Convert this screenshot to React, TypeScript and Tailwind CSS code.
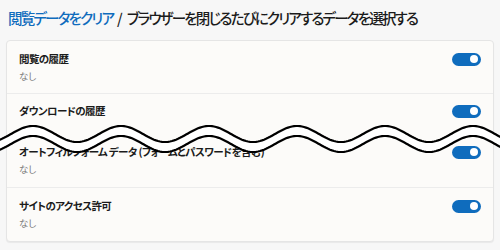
const FONT = "font-['Noto_Sans_CJK_JP','Noto_Sans',sans-serif] [font-feature-settings:'palt']";

function Toggle() {
  return (
    <span className="relative inline-flex h-[13px] w-[29px] shrink-0 items-center rounded-full bg-[#0f6cbd]">
      <span className="absolute right-[3px] h-[8px] w-[8px] rounded-full bg-white" />
    </span>
  );
}

function Title({ children }: { children: React.ReactNode }) {
  return (
    <div className="flex h-4 items-center justify-between">
      <span className="text-[10.5px] font-semibold leading-4 tracking-[-0.6px] text-[#1b1b1b]">{children}</span>
      <Toggle />
    </div>
  );
}

function Sub() {
  return <p className="mt-[2px] text-[9.5px] leading-[14px] text-[#7a7a7a]">なし</p>;
}

// torn-page wave drawn over the cut between rows 2 and 3
function Wave() {
  const pts: [number, number][] = [];
  for (let x = -4; x <= 504; x += 2) {
    pts.push([x, 19 - 8 * Math.cos((2 * Math.PI * (x - 33)) / 88)]);
  }
  const upper = pts.map(([x, y]) => `${x},${y.toFixed(2)}`).join(" ");
  const lower = pts.map(([x, y]) => `${x},${(y + 10).toFixed(2)}`).join(" ");
  const band = pts
    .map(([x, y]) => `${x},${y.toFixed(2)}`)
    .concat([...pts].reverse().map(([x, y]) => `${x},${(y + 10).toFixed(2)}`))
    .join(" ");
  return (
    <svg
      className="pointer-events-none absolute left-0 top-[115px]"
      width="500"
      height="45"
      viewBox="0 0 500 45"
    >
      <polygon points={band} fill="#ffffff" />
      <polyline points={upper} fill="none" stroke="#000" strokeWidth="2.2" />
      <polyline points={lower} fill="none" stroke="#000" strokeWidth="2.2" />
    </svg>
  );
}

export default function App() {
  return (
    <div className={`relative h-[250px] w-[500px] overflow-hidden bg-[#f7f7f7] px-[6px] ${FONT}`}>
      <h1 className="mt-[8px] mb-[12px] flex h-[20px] items-center pl-[2px] text-[14.5px] font-medium leading-5 tracking-[-1.8px] text-[#1b1b1b]">
        <span className="text-[#0f6cbd]">閲覧データをクリア</span>
        <span className="mx-[4px] tracking-normal">/</span>
        <span>ブラウザーを閉じるたびにクリアするデータを選択する</span>
      </h1>

      <div className="rounded-[4px] border border-[#e5e5e5] bg-[#fcfbf9] shadow-[0_1px_1px_rgba(0,0,0,0.06)]">
        <div className="px-3 pt-[10px] pb-[10px]">
          <Title>閲覧の履歴</Title>
          <Sub />
        </div>
        <div className="h-[41px] overflow-hidden border-t border-[#ececec] px-3 pt-[9px]">
          <Title>ダウンロードの履歴</Title>
        </div>
        <div className="px-3 pt-[10px] pb-[11px]">
          <Title>オートフィルフォーム データ (フォームとパスワードを含む)</Title>
          <Sub />
        </div>
        <div className="border-t border-[#ececec] px-3 pt-[10px] pb-[11px]">
          <Title>サイトのアクセス許可</Title>
          <Sub />
        </div>
      </div>

      <Wave />
    </div>
  );
}
